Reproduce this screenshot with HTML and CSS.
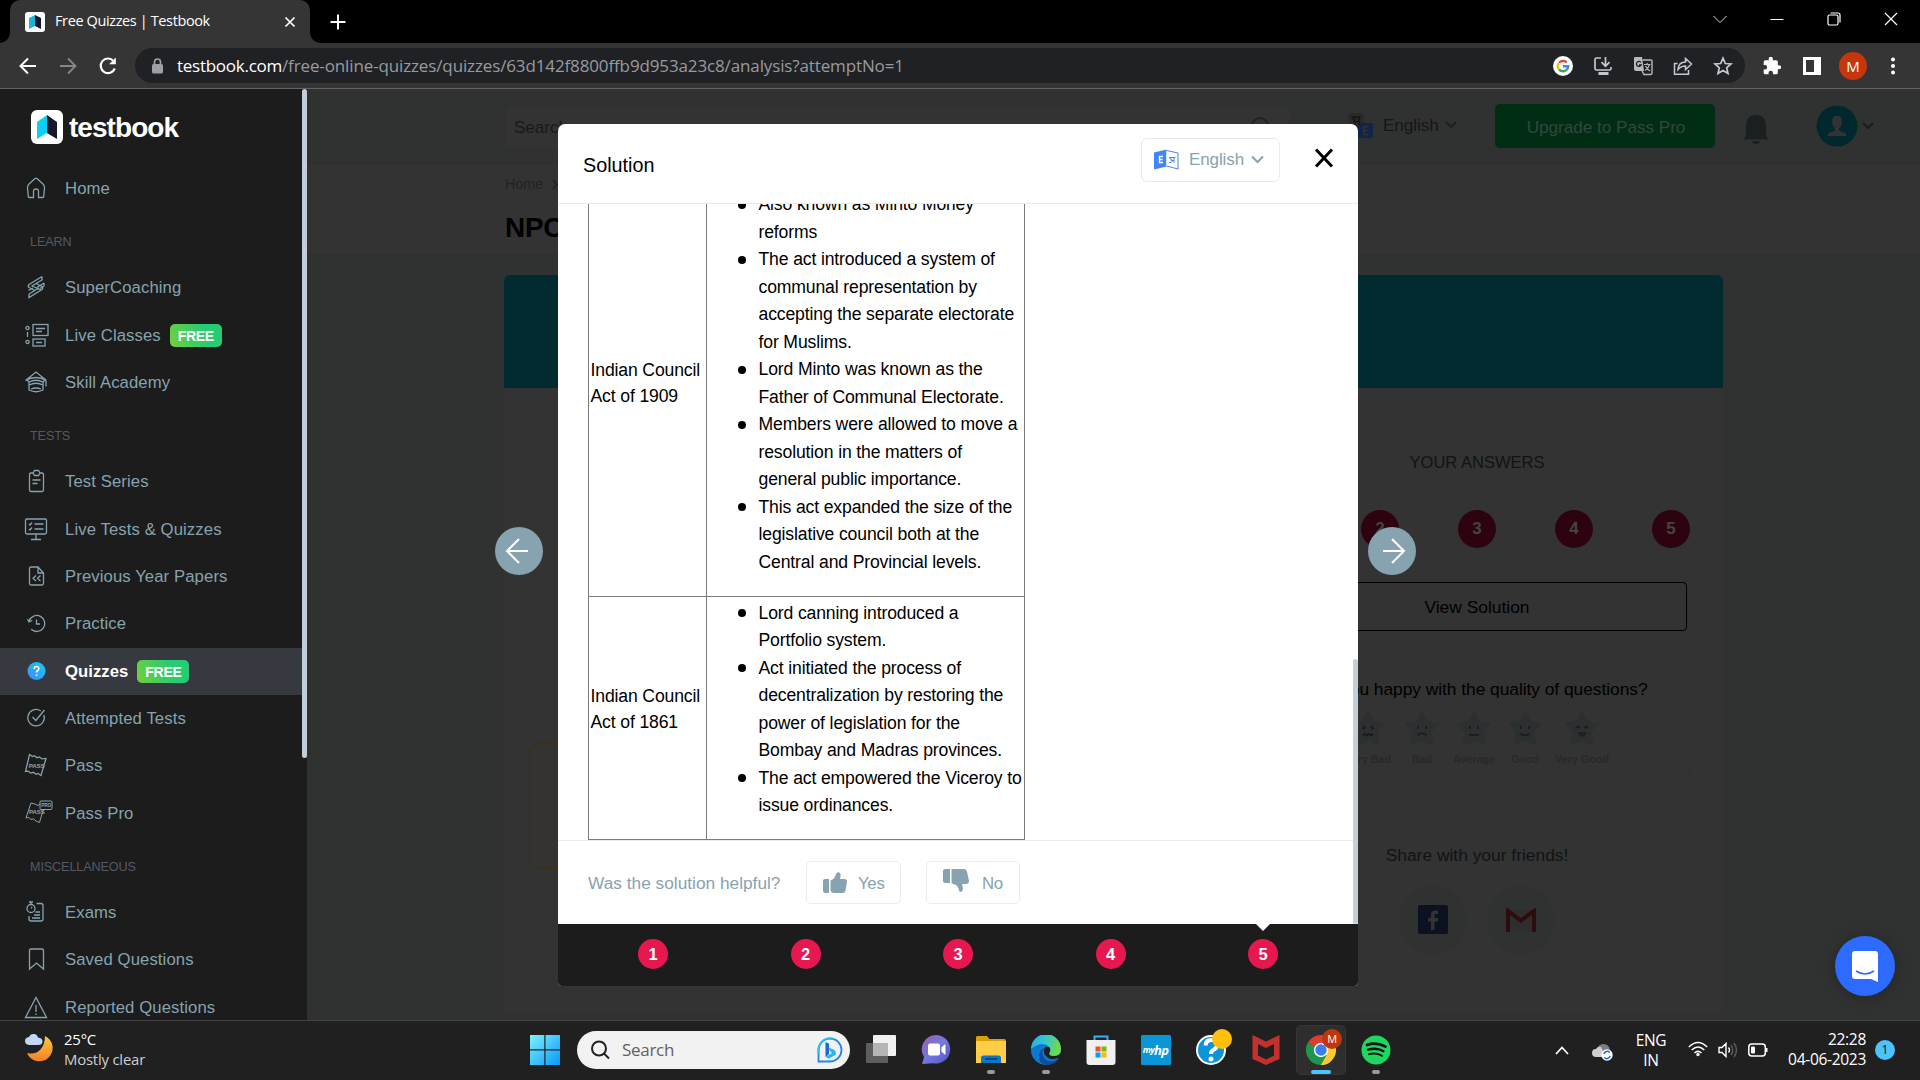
FILE: index.html
```html
<!DOCTYPE html>
<html lang="en">
<head>
<meta charset="utf-8">
<title>Free Quizzes | Testbook</title>
<link rel="stylesheet" href="styles.css">
</head>
<body>
<header class="tabstrip">
  <div class="tab">
    <svg class="fav" width="20" height="20" viewBox="0 0 20 20"><rect width="20" height="20" rx="3" fill="#fff"/><path d="M4 6l6-3v11l-6 3z" fill="#19b5d8"/><path d="M10 3l6 3v11l-6-3z" fill="#15172b"/></svg>
    <span class="tab-title">Free Quizzes | Testbook</span>
    <svg width="12" height="12" viewBox="0 0 12 12" stroke="#fff" stroke-width="1.7"><path d="M1.5 1.5l9 9M10.500 1.500l-9 9"/></svg>
  </div>
  <svg class="plus" width="16" height="16" viewBox="0 0 16 16" stroke="#fff" stroke-width="2"><path d="M8 .5v15M.5 8h15"/></svg>
  <div class="wincontrols">
    <svg width="16" height="16" viewBox="0 0 16 16" fill="none" stroke="#ddd"><path d="M1.500 5L8 11.500 14.500 5"/></svg>
    <svg width="16" height="16" viewBox="0 0 16 16" stroke="#fff"><path d="M1.500 8.500h13"/></svg>
    <svg width="16" height="16" viewBox="0 0 16 16" fill="none" stroke="#fff" stroke-width="1.200"><rect x="2" y="4" width="10" height="10" rx="1.500"/><path d="M4.500 2H12a2 2 0 0 1 2 2v7.500"/></svg>
    <svg width="16" height="16" viewBox="0 0 16 16" stroke="#fff" stroke-width="1.200"><path d="M2 2l12 12M14 2L2 14"/></svg>
  </div>
</header>
<div class="toolbar">
  <div class="nav">
    <svg width="20" height="20" viewBox="0 0 20 20" fill="none" stroke="#fff" stroke-width="2"><path d="M18 10H3M10 2.500L2.500 10l7.500 7.500"/></svg>
    <svg width="20" height="20" viewBox="0 0 20 20" fill="none" stroke="#85878a" stroke-width="1.800"><path d="M2 10h15M10 2.500l7.500 7.500-7.500 7.500"/></svg>
    <svg width="20" height="20" viewBox="0 0 20 20" fill="none" stroke="#fff" stroke-width="2.200"><path d="M16.800 12.500A7.300 7.300 0 1 1 15.500 5"/><path d="M17.800 1.500v6.700h-6.700z" fill="#fff" stroke="none"/></svg>
  </div>
  <div class="omnibox">
    <svg width="13" height="16" viewBox="0 0 13 16"><rect x="1" y="6" width="11" height="9.500" rx="1.500" fill="#9aa0a6"/><path d="M3.500 6V4a3 3 0 0 1 6 0v2" fill="none" stroke="#9aa0a6" stroke-width="1.700"/></svg>
    <span class="url"><b>testbook.com</b><span>/free-online-quizzes/quizzes/63d142f8800ffb9d953a23c8/analysis?attemptNo=1</span></span>
    <div class="omni-icons">
      <svg width="20" height="20" viewBox="0 0 20 20" fill="none" stroke-width="2.400"><circle cx="10" cy="10" r="10" fill="#fff"/><path d="M6 6.800A5.200 5.200 0 0 1 13.700 6.300" stroke="#ea4335"/><path d="M5.700 7.200a5.200 5.200 0 0 0 0 5.600" stroke="#fbbc05"/><path d="M5.900 13.200a5.200 5.200 0 0 0 7.600.7" stroke="#34a853"/><path d="M10 10.200h5.200a5.200 5.200 0 0 1-1.700 3.700" stroke="#4285f4"/></svg>
      <svg width="20" height="20" viewBox="0 0 20 20" fill="none" stroke="#c4c7cc" stroke-width="1.700"><path d="M8 2H3.500Q2 2 2 3.500v9Q2 14 3.500 14h13q1.500 0 1.500-1.500V11M12.500 1v8.500M8.500 6.200l4 4 4-4"/><path d="M5.500 17.500h10" stroke-width="3"/></svg>
      <svg width="20" height="20" viewBox="0 0 20 20"><path d="M2 1h7l2 14H3q-2 0-2-2V2q0-1 1-1z" fill="#b7babd"/><path d="M9.500 4H18q1 0 1 1v12q0 1.500-1.500 1.500H11L9 15" fill="none" stroke="#b7babd" stroke-width="1.400"/><path d="M8 6.500A2.500 2.500 0 1 0 8.200 9H6" fill="none" stroke="#202124" stroke-width="1.300"/><path d="M11 8.500h6.500M14.200 7v1.500M16.500 8.500q-1 4-4.500 6M12.500 10q1.500 3 4.500 5" fill="none" stroke="#b7babd" stroke-width="1.200"/></svg>
      <svg width="20" height="20" viewBox="0 0 20 20" fill="none" stroke="#c4c7cc" stroke-width="1.500"><path d="M4.500 7.500H1.500v10.800h14V14"/><path d="M5 13.500Q5.500 6 12.500 6V2.500L18.500 8l-6 5.500V10Q8 10 5 13.500z"/></svg>
      <svg width="20" height="20" viewBox="0 0 20 20" fill="none" stroke="#c4c7cc" stroke-width="1.700"><path d="M10 2.200l2.300 5.300 5.700.5-4.300 3.800 1.300 5.700-5-3-5 3 1.300-5.700L2 8l5.700-.5z"/></svg>
    </div>
  </div>
  <div class="ext">
    <svg width="20" height="20" viewBox="0 0 24 24" fill="#fff"><path d="M20.500 11H19V7a2 2 0 0 0-2-2h-4V3.500a2.500 2.500 0 0 0-5 0V5H4a2 2 0 0 0-2 2v3.800h1.500a2.700 2.700 0 0 1 0 5.400H2V20a2 2 0 0 0 2 2h3.800v-1.500a2.700 2.700 0 0 1 5.400 0V22H17a2 2 0 0 0 2-2v-4h1.500a2.500 2.500 0 0 0 0-5z"/></svg>
    <svg width="20" height="20" viewBox="0 0 20 20"><path fill="#fff" fill-rule="evenodd" d="M1 1h18v18H1zM4 4v12h8V4z"/></svg>
    <span class="profile">M</span>
    <svg class="kebab" width="20" height="20" viewBox="0 0 20 20" fill="#fff"><circle cx="10" cy="3.500" r="2"/><circle cx="10" cy="10" r="2"/><circle cx="10" cy="16.500" r="2"/></svg>
  </div>
</div>

<main class="page">
  <aside class="sidebar">
    <div class="logo">
      <svg width="32" height="34" viewBox="0 0 32 34"><rect width="32" height="34" rx="6" fill="#fff"/><path d="M6 12l10-7v18L6 29z" fill="#0ad0f4"/><path d="M16 5l10 7v17l-10-6z" fill="#17182b"/></svg>
      <span>testbook</span>
    </div>
    <nav class="menu">
      <a><svg viewBox="0 0 24 24"><path d="M9.500 21.500H5.500Q4.500 21.500 4.300 20.500L3.500 12Q3.300 9.500 5 8L11 2.500q1-.8 2 0L19 8q1.700 1.500 1.500 4l-.8 8.500q-.2 1-1.200 1h-4V15q-.2-2-2.500-2t-2.500 2z"/></svg>Home</a>
      <h4>LEARN</h4>
      <a><svg viewBox="0 0 24 24"><path d="M18 1.500L5 9.500q-1.500 1.500 0 3l6 3M18 1.500v3.500L8 11l9 4M20 8l-7 4.500M20 8v3l-4 2.500M5 19l10-6M5 19v3.500l13-8q1.500-1.500 0-3l-6-3M4.500 15.500L9 13"/></svg>SuperCoaching</a>
      <a><svg class="wide" viewBox="0 0 26 24"><rect x="9" y="1.500" width="15" height="11"/><path d="M12 5.500h9M12 8.500h6"/><rect x="9" y="16" width="12" height="7"/><path d="M12 19.500h6M3.500 9v5"/><circle cx="3.500" cy="5" r="1.600"/><circle cx="3.500" cy="19" r="1.600"/></svg>Live Classes<b class="free">FREE</b></a>
      <a><svg viewBox="0 0 24 24"><path d="M1.500 10.500L12 2l10.500 8.500M1.500 10.500q10.500-6 21 0M5 12v8q7 3.500 14 0v-8q-7-3.500-14 0zM5 15q7-3.500 14 0M22 11v5.500M7 19q5-2 10 0M3 10l2 2M21 10l-2 2"/></svg>Skill Academy</a>
      <h4>TESTS</h4>
      <a><svg viewBox="0 0 24 24"><path d="M9 4H7Q5.500 4 5.500 5.500V21q0 1.500 1.500 1.500h11q1.500 0 1.500-1.500V5.500Q19.500 4 18 4h-2M9 4l1.500-2.500h4L16 4l-1.500 2.500h-4zM8.500 11h8M8.500 14.500h5"/></svg>Test Series</a>
      <a><svg viewBox="0 0 24 24"><rect x="1.500" y="2" width="21" height="15" rx="1.500"/><path d="M10.500 7h9M10.500 12h9M5 7l1 1 2-2.500M5 12l1 1 2-2.500M12 17v5.500M7 22.500h10"/></svg>Live Tests &amp; Quizzes</a>
      <a><svg viewBox="0 0 24 24"><path d="M14 3H7Q5.500 3 5.500 4.500v15Q5.500 21 7 21h11q1.500 0 1.500-1.500V9zM14 3v6h5.500M12 11.500l-3 2.800 3 2.800M16.500 11.500l-3 2.800 3 2.800"/></svg>Previous Year Papers</a>
      <a><svg viewBox="0 0 24 24"><path d="M5.200 10a8 8 0 1 1 2 8.200M3.500 8L5 11l3.200-1.500M12.500 8.500V13H16"/></svg>Practice</a>
      <a class="active"><svg viewBox="0 0 24 24"><defs><linearGradient id="q" x1="0" y1="1" x2="1" y2="0"><stop stop-color="#4a86f0"/><stop offset="1" stop-color="#0ad0fa"/></linearGradient></defs><circle cx="12.500" cy="12" r="9" fill="url(#q)" stroke="none"/><path d="M10.200 10q0-2.500 2.300-2.500t2.300 2.200q0 1.300-1.300 2-1 .6-1 1.900M12.500 15.500v1.500" stroke="#fff" stroke-width="1.600"/></svg>Quizzes<b class="free">FREE</b></a>
      <a><svg viewBox="0 0 24 24"><path d="M19.800 9a8.200 8.200 0 1 1-3-4M8.500 11l3.300 3.500L20.500 4"/></svg>Attempted Tests</a>
      <a><svg viewBox="0 0 24 24"><path d="M5.500 1.500l3 2 2-.8 2.500 2 2.500-.8 2.500 2 4-.5L17 22.500l-3-2-2 .8-2.500-2-3 .8-2.500-2-2.500.4z"/><text x="4.800" y="15">PASS</text></svg>Pass</a>
      <a><svg class="extra" viewBox="0 0 28 24"><path d="M15 4l-2 1.500L10 4 6 3 1 18l2.500-.6 2.500 2 2.500-.5 3 2.500 3 1 3.500-12"/><rect x="15" y="1" width="12" height="8.500" rx="1"/><text x="4" y="14">PASS</text><text class="pro" x="16.200" y="7.300">PRO</text></svg>Pass Pro</a>
      <h4>MISCELLANEOUS</h4>
      <a><svg viewBox="0 0 24 24"><circle cx="7" cy="8.500" r="4"/><path d="M7 4.500V2M5 2h4M7 8.500l1-1.500M12.500 3.500H17q2 0 2 2V19q0 2-2 2H7q-2 0-2-2v-3M11.500 12H16M10 15h6M8 18h8"/></svg>Exams</a>
      <a><svg viewBox="0 0 24 24"><path d="M5.500 22V3.500Q5.500 2 7 2h11q1.500 0 1.500 1.500V22l-7-6z"/></svg>Saved Questions</a>
      <a><svg viewBox="0 0 24 24"><path d="M12 2.500L1.500 22.500h21zM12 10v7M12 18.500v1.500"/></svg>Reported Questions</a>
    </nav>
    <i class="side-thumb"></i>
  </aside>

  <section class="content">
    <div class="topbar">
      <div class="searchbox"><span>Search</span><svg width="22" height="22" viewBox="0 0 22 22" fill="none" stroke="#1b2427" stroke-width="2"><circle cx="11" cy="10" r="8"/><path d="M17 16l4 4"/></svg></div>
      <div class="lang">
        <svg width="26" height="26" viewBox="0 0 26 26"><rect width="16" height="16" rx="2" fill="#2a2a2a"/><rect x="10" y="10" width="15" height="15" rx="2" fill="#112449"/><path d="M15.500 13.500h4.500M15.500 17.500h4M15.500 21.500h4.500M15.500 13.500v8" stroke="#333" stroke-width="1.400"/><path d="M3 4h10M11 4v8M4 6q4-1 3 2l-2 .5q4 0 2 3t-4 0M8 8.500h3" stroke="#0b0b0b" fill="none"/></svg>
        <span>English</span>
        <svg width="12" height="8" viewBox="0 0 12 8" fill="none" stroke="#1a2124" stroke-width="2"><path d="M1 1l5 5 5-5"/></svg>
      </div>
      <div class="upgrade">Upgrade to Pass Pro</div>
      <svg class="bell" width="26" height="31" viewBox="0 0 26 31" fill="#1a2022"><path d="M3 22V12Q3 1 13 1t10 11v10l2.500 3.500H.5zM9 27h8q-.5 3-4 3t-4-3z"/></svg>
      <svg class="avatar" width="42" height="42" viewBox="0 0 42 42"><circle cx="21" cy="21" r="20.500" fill="#02282f"/><path d="M21 11q5 0 4.800 5.500-.3 5-2.800 7v2l6 2.500q1.500 1 1.500 3h-19q0-2 1.500-3l6-2.500v-2q-2.500-2-2.800-7Q16 11 21 11z" fill="#333"/></svg>
      <svg class="down" width="12" height="8" viewBox="0 0 12 8" fill="none" stroke="#171b1c" stroke-width="1.800"><path d="M1 1l5 5 5-5"/></svg>
    </div>
    <div class="titlebar">
      <div class="crumb">Home <svg width="6" height="11" viewBox="0 0 6 11" fill="none" stroke="#1a2124" stroke-width="1.600"><path d="M1 1l4 4.500L1 10"/></svg></div>
      <h1>NPC</h1>
    </div>
    <div class="card">
      <div class="banner"></div>
      <div class="card-body">
        <div class="note"></div>
        <div class="answers">
          <div class="caption">YOUR ANSWERS</div>
          <div class="marks"><b>1</b><b>2</b><b>3</b><b>4</b><b>5</b></div>
          <div class="view">View Solution</div>
          <div class="feedback">
            <p>Are you happy with the quality of questions?</p>
            <div class="stars">
              <div><svg viewBox="0 0 32 34"><path class="star" d="M16 2l5 9 9 2-6 8 1.500 11L16 28l-9.500 4L8 21 2 13l9-2z"/><path class="face" d="M11 15l2 1.500-2 1.500M21 15l-2 1.500 2 1.500M11 24l2-1.500 2 1.500 2-1.500 2 1.500 2-1.500"/></svg>Very Bad</div>
              <div><svg viewBox="0 0 32 34"><path class="star" d="M16 2l5 9 9 2-6 8 1.500 11L16 28l-9.500 4L8 21 2 13l9-2z"/><path class="face" d="M12 15v3M20 15v3M11.500 24q4.500-4 9 0"/></svg>Bad</div>
              <div><svg viewBox="0 0 32 34"><path class="star" d="M16 2l5 9 9 2-6 8 1.500 11L16 28l-9.500 4L8 21 2 13l9-2z"/><path class="face" d="M12 15v3M20 15v3M11.500 23.500h9"/></svg>Average</div>
              <div><svg viewBox="0 0 32 34"><path class="star" d="M16 2l5 9 9 2-6 8 1.500 11L16 28l-9.500 4L8 21 2 13l9-2z"/><path class="face" d="M12 15v3M20 15v3M11.500 22q4.500 4 9 0"/></svg>Good</div>
              <div><svg viewBox="0 0 32 34"><path class="star" d="M16 2l5 9 9 2-6 8 1.500 11L16 28l-9.500 4L8 21 2 13l9-2z"/><path class="face" d="M10 17l2-1.500 2 1.500M18 17l2-1.500 2 1.500M13 22h6q-3 5-6 0z"/></svg>Very Good</div>
            </div>
          </div>
          <div class="share">Share with your friends!</div>
          <div class="socials">
            <span><svg width="30" height="30" viewBox="0 0 30 30"><rect width="30" height="29" rx="2" fill="#0c1222"/><path d="M13 25V16.500h-3v-3.500h3v-3.500q0-4 4-4h3v3.500h-2q-1.500 0-1.500 1.500V13H20v3.500h-3.500V25z" fill="#333"/></svg></span>
            <span><svg width="30" height="24" viewBox="0 0 30 24"><path d="M2 2h26v22H2z" fill="#2e2e2e"/><path d="M2 24V3l13 9.500L28 3v21" fill="none" stroke="#2d0d0b" stroke-width="4"/></svg></span>
          </div>
        </div>
      </div>
    </div>
  </section>

  <div class="round prev"><svg width="24" height="28" viewBox="0 0 24 28" fill="none" stroke="#fff" stroke-width="2"><path d="M23 14H2M14 2L2 14l12 12"/></svg></div>

  <section class="modal">
    <header class="modal-head">
      <h2>Solution</h2>
      <div class="lang-btn">
        <svg width="25" height="22" viewBox="0 0 25 22"><path d="M0 3.500L12.500.5v17L0 20.500z" fill="#4285f4"/><path d="M12.500 1.500L24 4v16l-11.500-3" fill="#fff" stroke="#4285f4"/><path d="M9 7.500H5.500v6H9M5.500 10.500h3" stroke="#fff" stroke-width="1.300" fill="none"/><path d="M15 8.500h6.500M20 8.500V14M15.500 9.500q3 0 1.500 2 2 1 0 2.300l-2-.5M17.500 11.500H20" stroke="#4285f4" fill="none"/></svg>
        <span>English</span>
        <svg width="13" height="9" viewBox="0 0 13 9" fill="none" stroke="#87a3b0" stroke-width="2"><path d="M1 1.500l5.500 5.500L12 1.500"/></svg>
      </div>
      <svg class="close" width="20" height="20" viewBox="0 0 20 20" stroke="#000" stroke-width="3"><path d="M2 1.500l16 17M18 1.500l-16 17"/></svg>
    </header>
    <div class="modal-body">
      <table>
        <tr>
          <td class="act"><p>Indian Council<br>Act of 1909</p></td>
          <td><ul>
            <li>Also known as Minto Morley<br>reforms</li>
            <li>The act introduced a system of<br>communal representation by<br>accepting the separate electorate<br>for Muslims.</li>
            <li>Lord Minto was known as the<br>Father of Communal Electorate.</li>
            <li>Members were allowed to move a<br>resolution in the matters of<br>general public importance.</li>
            <li>This act expanded the size of the<br>legislative council both at the<br>Central and Provincial levels.</li>
          </ul></td>
        </tr>
        <tr>
          <td class="act"><p>Indian Council<br>Act of 1861</p></td>
          <td><ul>
            <li>Lord canning introduced a<br>Portfolio system.</li>
            <li>Act initiated the process of<br>decentralization by restoring the<br>power of legislation for the<br>Bombay and Madras provinces.</li>
            <li>The act empowered the Viceroy to<br>issue ordinances.</li>
          </ul></td>
        </tr>
      </table>
    </div>
    <div class="helpful">
      <span>Was the solution helpful?</span>
      <div class="vote yes"><svg width="24" height="22" viewBox="0 0 24 22" fill="#87a3b0"><path d="M2 7h4v14H2q-2 0-2-2V9q0-2 2-2zM7.500 8.500Q12 7 13 2q.5-2 2.500-1.800Q18 .8 17.500 4L17 7h4.500Q24 7 24 9.500l-1.500 9Q22 21 19.500 21H11q-3.500 0-3.500-3z"/></svg><span>Yes</span></div>
      <div class="vote no"><svg width="26" height="23" viewBox="0 0 26 23" fill="#87a3b0"><path d="M2 0h5v14H2q-2 0-2-2V2Q0 0 2 0zM8.500 0H21q2.500 0 3 2.500L26 12q0 3-3 3h-4l1 4.500q0 2.500-2 3.500-1.500 0-2-1.500-1-5-4-6-3.500-.5-3.500-3z"/></svg><span>No</span></div>
    </div>
    <footer class="pager"><b>1</b><b>2</b><b>3</b><b>4</b><b class="current">5</b></footer>
    <i class="modal-thumb"></i>
  </section>

  <div class="round next"><svg width="24" height="28" viewBox="0 0 24 28" fill="none" stroke="#fff" stroke-width="2"><path d="M1 14h21M10 2l12 12-12 12"/></svg></div>
  <div class="chat"><svg width="28" height="31" viewBox="0 0 28 31"><path d="M4 0h20q3 0 3 3v28l-7-3H4q-3 0-3-3V3q0-3 3-3z" fill="#fff"/><path d="M5 20q9 6 18 0" fill="none" stroke="#2d6bff" stroke-width="1.600"/></svg></div>
</main>

<footer class="taskbar">
  <div class="weather">
    <svg width="30" height="30" viewBox="0 0 30 30"><defs><linearGradient id="mn" x1="0" y1="0" x2="0" y2="1"><stop stop-color="#ffc83d"/><stop offset="1" stop-color="#f0802a"/></linearGradient></defs><path d="M21 3a13.300 13.300 0 1 1-18 17q8 2 13-3t5-14z" fill="url(#mn)"/><path d="M5 12q-4-.5-4-4t4-4q1.500-3.500 5-3 3 .3 4 3.500 4.500.5 4.500 4T14 12z" fill="#c3d5f8"/></svg>
    <div>25°C<br><span>Mostly clear</span></div>
  </div>
  <div class="dock">
    <svg class="start" width="30" height="30" viewBox="0 0 30 30"><defs><linearGradient id="w" x1="0" y1="0" x2="1" y2="1"><stop stop-color="#7df1ff"/><stop offset="1" stop-color="#0a98f8"/></linearGradient></defs><path d="M0 0h14.300v14.300H0zM15.500 0H30v14.300H15.500zM0 15.500h14.300V30H0zM15.500 15.500H30V30H15.500z" fill="url(#w)"/></svg>
    <div class="win-search">
      <svg width="20" height="20" viewBox="0 0 20 20" fill="none" stroke="#222" stroke-width="2"><circle cx="9" cy="8.500" r="7"/><path d="M14 13.500l5 5"/></svg>
      <span>Search</span>
      <svg width="26" height="26" viewBox="0 0 26 26" fill="none"><path d="M1.500 24.500V13A11.500 11.500 0 1 1 13 24.500z" stroke="#2386e6" stroke-width="1.800"/><path d="M1.500 17V13A11.500 11.500 0 0 1 17 2.200" stroke="#27bdf0" stroke-width="1.800"/><path d="M8.500 5l3.500 1.800V17l-3.500 3z" fill="#1769db"/><path d="M8.500 20l4-2.500 2.500-1.500-2-2-1.500-3.500 5 2q2.500 1 2.500 3.500 0 1.500-1.500 2.500L12 21.500z" fill="#2bb5ed"/></svg>
    </div>
    <div class="app"><svg viewBox="0 0 30 30"><rect x="0" y="8" width="22" height="20" rx="1" fill="#5d5d5d"/><rect x="7" y="0" width="23" height="21" rx="1" fill="#f1f1f1"/><path d="M7 8h15v13H7z" fill="#b5b5b5"/></svg></div>
    <div class="app"><svg viewBox="0 0 30 30"><defs><linearGradient id="t" x1="0" y1="0" x2="1" y2="1"><stop stop-color="#9a5cb4"/><stop offset=".5" stop-color="#7379db"/><stop offset="1" stop-color="#4f52c8"/></linearGradient></defs><path d="M15 0a14.300 14.300 0 1 1-3 28.300L2 29q-1 0-.7-1L3 22A14.300 14.300 0 0 1 15 0z" fill="url(#t)"/><rect x="7" y="8.500" width="12" height="12" rx="2" fill="#fff"/><path d="M20.500 12.500l3-3h1v10h-1l-3-3z" fill="#fff"/></svg></div>
    <div class="app run"><svg viewBox="0 0 30 30"><path d="M1 1h10l2.500 3H28q2 0 2 2v22H0V2z" fill="#dba004"/><path d="M0 6h30v22H0z" fill="#ffcd48"/><path d="M5 28v-5q0-2.500 2.500-2.500h15Q25 20.500 25 23v5z" fill="#0b76c4"/><path d="M9 24h12" stroke="#053f77" stroke-width="1.600"/></svg></div>
    <div class="app run"><svg viewBox="0 0 30 30"><defs><linearGradient id="e" x1="0" y1="0" x2="1" y2=".3"><stop stop-color="#29a8e8"/><stop offset=".5" stop-color="#34c5d2"/><stop offset="1" stop-color="#6edb4e"/></linearGradient></defs><circle cx="15" cy="15" r="15" fill="#0b79cd"/><path d="M0 14A15 15 0 0 1 30 14q0 7-7 7-4.500 0-5-2.500 2.500-3 .5-6.500Q11 5 0 14z" fill="url(#e)"/><path d="M13 13q-4 6 1 11t14-.5Q24 30 15 30 7 28 8 20q1-5 5-7z" fill="#114c96"/><path d="M13.500 12.500q4-2 5.500 1 .8 2.500-1 5 0 3 6 2.500 4 0 6-3.500v3.500q-1 1.500-2.500 2-7 2.500-11-.5-5.500-4-3-10z" fill="#202020"/></svg></div>
    <div class="app"><svg viewBox="0 0 30 30"><path d="M8.500 7V1.500h13V7" fill="none" stroke="#2fb2f4" stroke-width="2"/><path d="M.5 5h29v22q0 3-3 3h-23q-3 0-3-3z" fill="#f0f0f0"/><path d="M9.500 11.500h5v5h-5z" fill="#f05022"/><path d="M15.500 11.500h5v5h-5z" fill="#80b900"/><path d="M9.500 17.500h5v5h-5z" fill="#02a3ee"/><path d="M15.500 17.500h5v5h-5z" fill="#fdb604"/></svg></div>
    <div class="app"><div class="hp"><span>my</span><b>hp</b></div></div>
    <div class="app"><svg class="help" viewBox="0 0 36 36"><circle cx="15" cy="21" r="14" fill="#0a95d7" stroke="#fff" stroke-width="2"/><path d="M9.500 16.500q.5-5.500 6-5.500t5.500 5q0 3-3 4.500t-3 4.500" fill="none" stroke="#fff" stroke-width="4"/><circle cx="15" cy="30" r="2.500" fill="#fff"/><circle cx="26" cy="10" r="10" fill="#ffbf0b"/></svg></div>
    <div class="app"><svg viewBox="0 0 30 30"><path d="M1.500 0L15 6.500 28.500 0v24L15 30 1.500 24zM7 9v11.500l8 4 8-4V9l-8 4z" fill="#c4302d" fill-rule="evenodd"/></svg></div>
    <div class="app run on"><svg class="help" viewBox="0 0 36 36"><path d="M15 21L2 13.500A15 15 0 0 1 28 13.500z" fill="#e33b2e"/><path d="M15 21l13-7.500A15 15 0 0 1 15 36z" fill="#fcc934"/><path d="M15 21v15A15 15 0 0 1 2 13.500z" fill="#20964b"/><path d="M8 25l7 11 6.500-10z" fill="#20964b"/><path d="M21.500 24.500L15 36q6 0 9-3l3-18h-9z" fill="#fcc934"/><circle cx="15" cy="21" r="7.200" fill="#fff"/><circle cx="15" cy="21" r="5.700" fill="#3b7ded"/><circle cx="26" cy="10" r="10" fill="#bf360c"/><text x="26" y="14" text-anchor="middle">M</text></svg></div>
    <div class="app run"><svg viewBox="0 0 30 30" fill="none" stroke="#101010" stroke-linecap="round"><circle cx="15" cy="15" r="14.500" fill="#1ed760" stroke="none"/><path d="M6 9.800q10-3 18.500 1.800" stroke-width="2.800"/><path d="M7 14.700q9-2.500 15.500 1.500" stroke-width="2.300"/><path d="M8 19.200q7-2 13 1.500" stroke-width="1.900"/></svg></div>
  </div>
  <div class="tray">
    <svg class="up" width="14" height="9" viewBox="0 0 14 9" fill="none" stroke="#fff" stroke-width="1.800"><path d="M1 8l6-6.500L13 8"/></svg>
    <svg class="cloud" width="21" height="18" viewBox="0 0 21 18"><path d="M5 7q1-6 6.500-6T18 7q2 1 1.500 4L10 12z" fill="#7d7d7d"/><path d="M4 14q-4 0-4-4t4-4q2-3 5-2l5 10z" fill="#d0d0d0"/><circle cx="15" cy="12" r="5.700" fill="#fff"/><path d="M11.800 11a3.500 3.500 0 0 1 6-1.500M18.200 13a3.500 3.500 0 0 1-6 1.500" stroke="#1c6fc4" stroke-width="1.500" fill="none"/></svg>
    <div class="kb">ENG<br>IN</div>
    <svg class="wifi" width="20" height="16" viewBox="0 0 20 16" fill="none" stroke="#fff" stroke-width="1.500"><path d="M.8 6q9.200-9 18.400 0M3.700 9q6.300-6 12.600 0M6.500 12q3.500-3.200 7 0"/><circle cx="10" cy="13.500" r="1.700" fill="#fff" stroke="none"/></svg>
    <svg class="vol" width="20" height="16" viewBox="0 0 20 16" fill="none" stroke="#fff" stroke-width="1.400"><path d="M1 5.500h3l4-4v13l-4-4H1zM10.500 5.500q2 2.500 0 5"/><path d="M13 3q3.500 5 0 10M16 1q5 7 0 14" stroke="#5c5c5c"/></svg>
    <svg class="batt" width="20" height="14" viewBox="0 0 20 14"><rect x=".8" y="1" width="16.500" height="12" rx="3" fill="none" stroke="#fff" stroke-width="1.500"/><rect x="3" y="3.500" width="4" height="7" rx="1" fill="#fff"/><path d="M18 5h1.500v4H18z" fill="#fff"/></svg>
    <div class="clock">22:28<br>04-06-2023</div>
    <span class="count">1</span>
  </div>
</footer>
</body>
</html>
```
FILE: styles.css
```css
* { box-sizing: border-box; }
body { margin: 0; width: 1920px; height: 1080px; overflow: hidden; background: #202020; font-family: "Liberation Sans", Arial, sans-serif; }
svg { display: block; flex: none; }
h1, h2, h4, p, ul { margin: 0; padding: 0; font-weight: normal; }

/* browser chrome */
.tabstrip { height: 43px; background: #000; display: flex; align-items: center; font-family: "Open Sans", sans-serif; }
.tab { width: 300px; height: 43px; margin-left: 10px; padding: 0 14px 0 15px; background: #353535; border-radius: 10px 10px 0 0; display: flex; align-items: center; color: #fff; position: relative; }
.tab::before, .tab::after { content: ""; position: absolute; bottom: 0; width: 10px; height: 10px; }
.tab::before { left: -10px; background: radial-gradient(circle at 0 0, #000 9.500px, #353535 10px); }
.tab::after { right: -10px; background: radial-gradient(circle at 100% 0, #000 9.500px, #353535 10px); }
.tab-title { margin-left: 10px; flex: 1; font-size: 14.500px; letter-spacing: -.38px; padding-bottom: 2px; white-space: nowrap; }
.plus { margin-left: 20px; }
.wincontrols { margin-left: auto; margin-right: 21px; display: flex; gap: 41px; padding-bottom: 6px; }
.toolbar { height: 46px; background: #353535; border-bottom: 1px solid #626262; display: flex; align-items: center; font-family: "Open Sans", sans-serif; }
.nav { width: 135px; padding-left: 18px; display: flex; gap: 20px; }
.omnibox { width: 1610px; height: 35px; border-radius: 18px; background: #202124; display: flex; align-items: center; padding: 0 12px 0 16px; }
.url { margin-left: 13px; flex: 1; font-size: 17px; letter-spacing: -.13px; color: #989ba0; white-space: nowrap; padding-bottom: 1px; }
.url b { font-weight: normal; color: #fff; letter-spacing: -.26px; }
.omni-icons { display: flex; gap: 20px; }
.ext { display: flex; align-items: center; margin-left: 17px; gap: 20px; }
.profile { width: 28px; height: 28px; margin: 0 -3px; border-radius: 50%; background: #c5360c; color: #fff; font-size: 15px; line-height: 28px; text-align: center; }
.kebab { margin-left: -1px; }

/* page */
.page { height: 931px; display: flex; position: relative; overflow: hidden; }
.sidebar { width: 307px; background: #1c1c1c; position: relative; padding-right: 5px; overflow: hidden; flex: none; }
.logo { display: flex; align-items: center; height: 34px; margin: 21px 0 21px 31px; color: #fff; }
.logo span { font: bold 28px/34px "Liberation Sans", sans-serif; letter-spacing: -.950px; margin-left: 6px; padding-top: 1px; }
.menu a { display: flex; align-items: center; height: 47.400px; padding-top: 1px; color: #87a3b0; font-size: 16.700px; letter-spacing: .1px; white-space: nowrap; }
.menu svg { width: 24px; height: 24px; margin: 0 17px 2px 24px; fill: none; stroke: #87a3b0; stroke-width: 1.300; }
.menu svg.wide { width: 26px; margin-right: 15px; }
.menu svg.extra { width: 28px; margin: 0 12px 4px 25px; stroke-width: 1; }
.menu svg text { font: bold 6.200px "Liberation Sans", sans-serif; letter-spacing: -.2px; fill: #87a3b0; stroke: none; }
.menu svg text.pro { font-size: 4.800px; }
.menu h4 { height: 51.700px; line-height: 60px; padding-left: 30px; font-size: 12.600px; letter-spacing: -.1px; color: #545968; }
.menu a.active { background: #373941; color: #fff; font-weight: bold; letter-spacing: .05px; }
.free { width: 52px; height: 23px; border-radius: 5px; margin-left: 9px; background: linear-gradient(70deg, #74cf3c, #25cc71 65%); color: #fff; font-size: 14px; line-height: 25px; text-align: center; letter-spacing: -.3px; }
.side-thumb { position: absolute; right: 0; top: 0; width: 5px; height: 669px; border-radius: 3px; background: #c3cfd8; }

.content { flex: 1; background: #303231; }
.topbar { height: 75px; border-bottom: 1px solid #2c2e2e; display: flex; align-items: flex-start; padding-left: 198px; font-size: 17.200px; }
.searchbox { width: 787px; height: 44px; margin-top: 16px; background: #333; border: 1px solid #303030; border-radius: 5px; display: flex; justify-content: space-between; padding: 10px 20px 0 8px; color: #191919; letter-spacing: -.1px; }
.searchbox span { padding-top: 1px; }
.lang { display: flex; align-items: center; margin: 24px 0 0 56px; color: #161616; }
.lang span { width: 62px; margin: -2px 0 0 9px; letter-spacing: -.1px; }
.lang svg:last-child { margin-top: -2px; }
.upgrade { width: 220px; height: 44px; margin: 15px 0 0 38px; border-radius: 5px; background: #012d14; color: #35463d; text-align: center; line-height: 48px; font-size: 17.100px; padding-left: 2px; }
.bell { margin: 25px 0 0 28px; }
.avatar { margin: 16px 0 0 47px; }
.down { margin: 33px 0 0 4px; }
.titlebar { height: 91px; background: #333; border-bottom: 1px solid #2e2f2f; padding: 10px 0 0 198px; }
.crumb { display: flex; align-items: center; gap: 9px; height: 20px; color: #1e2426; font-size: 14.300px; }
.titlebar h1 { font: bold 28px/36px "Liberation Sans", sans-serif; letter-spacing: -.3px; margin-top: 16px; color: #000; }
.card { width: 1219px; height: 738px; margin: 20px 0 0 197px; background: #333; border-radius: 6px; overflow: hidden; }
.banner { height: 113px; background: #022b31; }
.card-body { display: flex; justify-content: space-between; padding-right: 33px; }
.note { width: 400px; height: 127px; margin: 354px 0 0 25px; border: 1px solid #393014; border-radius: 12px; background: #34332f; }
.answers { width: 426px; padding-top: 64px; text-align: center; color: #101416; font-size: 16.500px; }
.caption { height: 22px; line-height: 21px; }
.marks { width: 426px; display: flex; justify-content: space-between; margin: 36px 0 0; }
.marks b { width: 38px; height: 38px; border-radius: 50%; background: #2e0310; color: #454545; line-height: 38px; font-size: 17px; }
.view { width: 420px; height: 49px; line-height: 49px; border: 1px solid #000; border-radius: 4px; margin: 34px auto 0; color: #000; font-size: 17.400px; }
.feedback { height: 119px; margin-top: 29px; border: 1px solid #303131; border-radius: 7px; color: #000; font-size: 17.400px; padding-top: 17px; }
.feedback p { line-height: 22px; white-space: nowrap; letter-spacing: -.05px; padding-left: 3px; }
.stars { display: grid; grid-template-columns: 54px 54px 50px 52px 62px; justify-content: center; margin: 10px 0 0 0; }
.stars div { font-weight: bold; font-size: 10.800px; color: #262a2b; white-space: nowrap; display: flex; flex-direction: column; align-items: center; gap: 7px; }
.stars svg { width: 34px; height: 36px; }
.star { fill: #2c3030; stroke: #2c3030; stroke-width: 2; stroke-linejoin: round; }
.face { fill: none; stroke: #191b1c; stroke-width: 1.500; }
.share { margin-top: 64px; height: 24px; line-height: 24px; font-size: 17.400px; }
.socials { display: flex; gap: 20px; justify-content: center; margin-top: 19px; }
.socials span { width: 68px; height: 68px; border-radius: 50%; background: #303232; display: flex; align-items: center; justify-content: center; }

/* solution dialog */
.round { position: absolute; top: 438px; width: 48px; height: 48px; border-radius: 50%; background: #87a3b0; display: flex; align-items: center; justify-content: center; }
.prev { left: 495px; padding-right: 4px; }
.next { left: 1368px; padding-left: 4px; }
.modal { position: absolute; left: 558px; top: 35px; width: 800px; height: 862px; border-radius: 7px 7px 4px 4px; overflow: hidden; background: #fff; display: flex; flex-direction: column; }
.modal-head { height: 80px; flex: none; border-bottom: 1px solid #e9eaea; display: flex; align-items: flex-start; padding-left: 25px; }
.modal-head h2 { font-size: 19.800px; line-height: 24px; margin-top: 29px; width: 558px; }
.lang-btn { width: 139px; height: 44px; margin-top: 14px; border: 1px solid #e9eaea; border-radius: 6px; display: flex; align-items: center; padding: 0 0 1px 12px; color: #87a3b0; font-size: 17px; }
.lang-btn span { margin: 0 7px 0 10px; letter-spacing: -.1px; }
.lang-btn svg:first-child { margin-top: 1px; }
.close { margin: 24px 0 0 34px; }
.modal-body { height: 636px; flex: none; overflow: hidden; display: flex; flex-direction: column; justify-content: flex-end; align-items: flex-start; padding-left: 30px; }
table { width: 437px; border-collapse: collapse; flex: none; font-size: 17.600px; letter-spacing: -.14px; color: #000; white-space: nowrap; }
td { border: 1px solid #7c7c7c; padding: 1.500px; vertical-align: middle; }
td.act { width: 118px; line-height: 26.400px; }
.act p { margin-bottom: 17px; }
td ul { padding-left: 50px; margin: 1.800px 0 17.700px; line-height: 27.500px; list-style: none; }
td li { position: relative; }
td li::before { content: ""; position: absolute; left: -21px; top: 9.500px; width: 8px; height: 8px; border-radius: 50%; background: #000; }
.helpful { height: 84px; flex: none; border-top: 1px solid #e9eaea; display: flex; align-items: center; padding: 0 0 0 30px; color: #87a3b0; font-size: 17.300px; }
.helpful > span { width: 218px; white-space: nowrap; padding-top: 2px; }
.vote { height: 43px; border: 1px solid #ececec; border-radius: 5px; display: flex; align-items: center; font-size: 16.800px; letter-spacing: -.3px; }
.vote span { padding-top: 2px; }
.yes { width: 95px; margin-right: 25px; padding-left: 16px; gap: 11px; }
.no { width: 94px; padding-left: 16px; gap: 13px; }
.no svg { margin-top: -4px; }
.pager { flex: 1; background: #1c1c1c; display: flex; justify-content: space-between; padding: 15px 80px 0; }
.pager b { width: 30px; height: 30px; border-radius: 50%; background: #e6184f; color: #fff; font-size: 16.500px; line-height: 31px; text-align: center; position: relative; }
.current::before { content: ""; position: absolute; left: 8px; top: -15px; border: 7px solid transparent; border-top-color: #fff; border-bottom: 0; }
.modal-thumb { position: absolute; right: 0; top: 535px; width: 5px; height: 265px; border-radius: 3px; background: #c3cfd8; }
.chat { position: absolute; right: 25px; bottom: 24px; width: 60px; height: 60px; border-radius: 50%; background: #2d6bff; display: flex; align-items: center; justify-content: center; box-shadow: 0 1px 14px rgba(0,0,0,.25); }

/* taskbar */
.taskbar { height: 60px; border-top: 1px solid #454545; background: #202020; display: flex; align-items: center; padding-bottom: 1px; color: #fff; font: 15.500px/20px "Open Sans", sans-serif; letter-spacing: -.3px; white-space: nowrap; }
.weather { width: 530px; padding-left: 24px; display: flex; gap: 10px; align-items: center; font-size: 14.900px; letter-spacing: -.2px; }
.weather > div { margin-top: -2px; }
.weather span { color: #cfcfcf; }
.weather svg { margin-top: -4px; }
.dock { display: flex; align-items: center; }
.win-search { width: 273px; height: 38px; margin: 0 3px 0 17px; border-radius: 19px; background: #f2f2f2; display: flex; align-items: center; padding: 0 7px 0 13px; color: #616161; font-size: 17px; }
.win-search span { flex: 1; margin-left: 12px; }
.app { width: 55px; height: 50px; display: flex; align-items: center; justify-content: center; position: relative; }
.app svg { width: 30px; height: 30px; }
.app svg.help { width: 36px; height: 36px; margin: -6px 0 0 6px; }
.app text { font: 11px "Open Sans", sans-serif; fill: #fff; }
.run::after { content: ""; position: absolute; left: 23.500px; bottom: 1px; width: 8px; height: 4px; border-radius: 2px; background: #9a9a9a; }
.on { width: 50px; margin: 0 2.500px; background: #2e2e2e; border: 1px solid #363636; border-radius: 5px; }
.on::after { left: 14px; bottom: 0; width: 20px; background: #4cc2ff; }
.hp { width: 30px; height: 30px; background: #0a95d7; border-radius: 1px; display: flex; align-items: center; justify-content: center; font-style: italic; line-height: 28px; letter-spacing: -.7px; }
.hp span { font-size: 9px; font-weight: bold; }
.hp b { font-size: 13px; }
.tray { margin-left: auto; display: flex; align-items: center; padding-right: 25px; text-align: center; }
.cloud { margin: 4px 0 0 23px; }
.kb { width: 40px; margin-left: 18px; }
.wifi { margin: -2px 0 0 17px; }
.vol { margin-left: 10px; }
.batt { margin-left: 10px; }
.clock { width: 92px; text-align: right; margin: -2px 9px 0 6px; }
.count { width: 20px; height: 20px; border-radius: 50%; background: #4cc2ff; color: #111; font-size: 12px; letter-spacing: 0; }
```
